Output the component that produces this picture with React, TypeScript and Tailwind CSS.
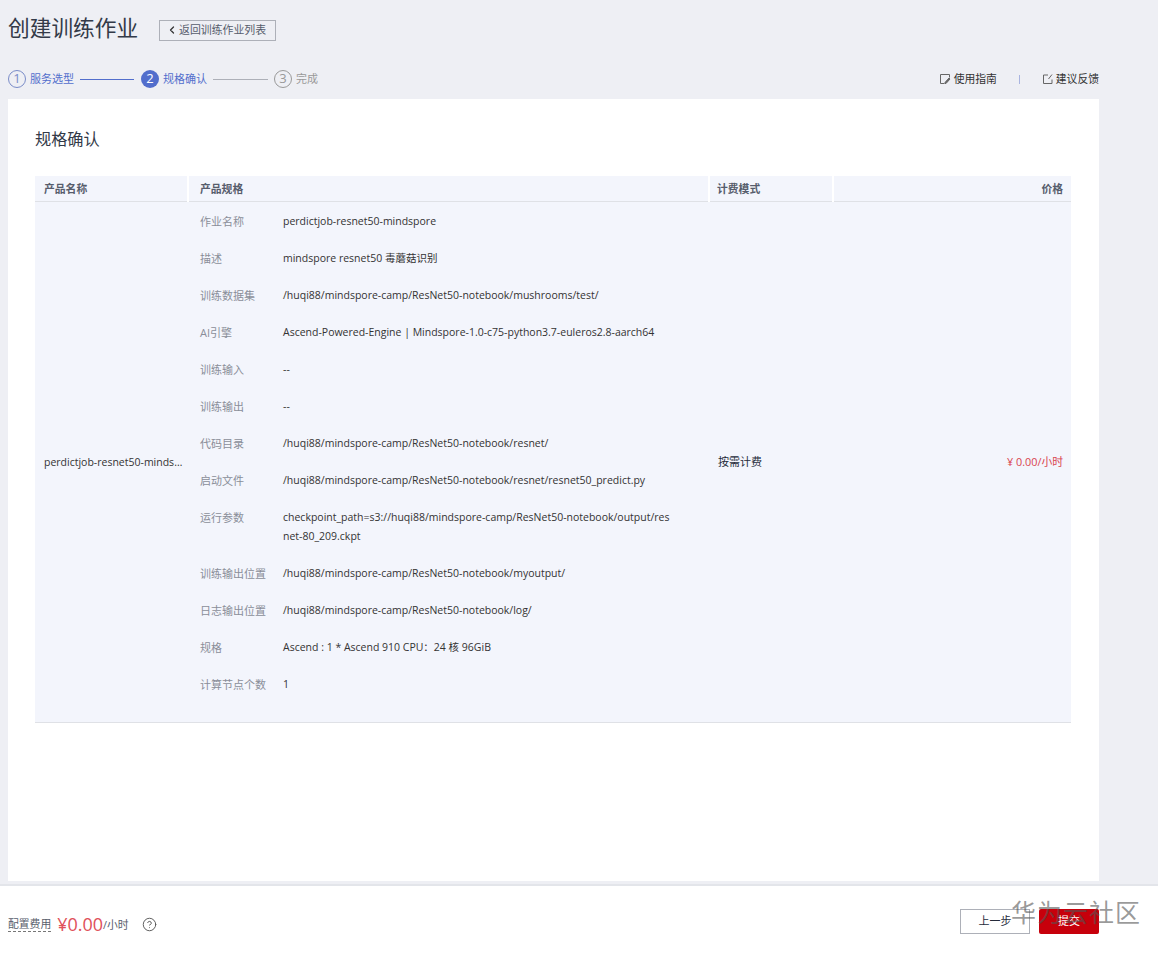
import React from 'react';
import { ChevronLeft, CircleHelp } from 'lucide-react';

const FONT = "font-['Open_Sans','Noto_Sans_CJK_SC',sans-serif]";

const SPECS: { label: string; value: string }[] = [
  { label: '作业名称', value: 'perdictjob-resnet50-mindspore' },
  { label: '描述', value: 'mindspore resnet50 毒蘑菇识别' },
  { label: '训练数据集', value: '/huqi88/mindspore-camp/ResNet50-notebook/mushrooms/test/' },
  { label: 'AI引擎', value: 'Ascend-Powered-Engine | Mindspore-1.0-c75-python3.7-euleros2.8-aarch64' },
  { label: '训练输入', value: '--' },
  { label: '训练输出', value: '--' },
  { label: '代码目录', value: '/huqi88/mindspore-camp/ResNet50-notebook/resnet/' },
  { label: '启动文件', value: '/huqi88/mindspore-camp/ResNet50-notebook/resnet/resnet50_predict.py' },
  { label: '运行参数', value: 'checkpoint_path=s3://huqi88/mindspore-camp/ResNet50-notebook/output/resnet-80_209.ckpt' },
  { label: '训练输出位置', value: '/huqi88/mindspore-camp/ResNet50-notebook/myoutput/' },
  { label: '日志输出位置', value: '/huqi88/mindspore-camp/ResNet50-notebook/log/' },
  { label: '规格', value: 'Ascend : 1 * Ascend 910 CPU：24 核 96GiB' },
  { label: '计算节点个数', value: '1' },
];

const GuideIcon = () => (
  <svg width="12" height="12" viewBox="0 0 12 12" fill="none" stroke="#666" strokeWidth="1">
    <path d="M10.500 4.500V1.500h-9v9h4" />
    <path d="M6 9.500 10 5l1 1-4 4.500H6z" fill="#666" />
  </svg>
);

const FeedbackIcon = () => (
  <svg width="12" height="12" viewBox="0 0 12 12" fill="none" stroke="#666" strokeWidth="1">
    <path d="M6 2H1.500v8.500h8.500V6.500" />
    <path d="M6.500 6 10 1.500" />
  </svg>
);

const Step: React.FC<{ n: number; label: string; state: 'done' | 'active' | 'todo' }> = ({ n, label, state }) => (
  <div className="flex items-center gap-[4px]">
    {state === 'active' ? (
      <span className="flex h-[18px] w-[18px] items-center justify-center rounded-full bg-[#526ecc] text-[13px] text-white">{n}</span>
    ) : (
      <span className={`flex h-[18px] w-[18px] items-center justify-center rounded-full border text-[13px] ${state === 'done' ? 'border-[#7a8cc8] text-[#7a8cc8]' : 'border-[#999] text-[#999]'}`}>{n}</span>
    )}
    <span className={`text-[11px] leading-[18px] ${state === 'todo' ? 'text-[#999]' : 'text-[#526ecc]'}`}>{label}</span>
  </div>
);

export default function App() {
  return (
    <div className={`relative flex h-[954px] w-[1158px] flex-col overflow-hidden bg-[#eeeff4] ${FONT}`}>
      <div className="flex-1 pl-[8px] pr-[59px]">
        <div className="flex h-[60px] items-center pb-[4px]">
          <h1 className="w-[130px] text-[21.7px] leading-[30px] font-normal whitespace-nowrap text-[#333a48]">创建训练作业</h1>
          <button className="mt-[4px] ml-[21px] flex h-[21px] w-[117px] items-center border border-[#adb0b8] pl-[6px] text-[10.900px] text-[#575d6c]">
            <ChevronLeft className="mr-[1px] h-[12px] w-[12px] text-[#333]" strokeWidth={2.5} />
            返回训练作业列表
          </button>
        </div>

        <div className="flex h-[39px] items-center justify-between pb-[1px]">
          <div className="flex items-center">
            <Step n={1} label="服务选型" state="done" />
            <div className="mr-[7px] ml-[6px] h-px w-[54px] bg-[#526ecc]" />
            <Step n={2} label="规格确认" state="active" />
            <div className="mx-[6px] h-px w-[55px] bg-[#adb0b8]" />
            <Step n={3} label="完成" state="todo" />
          </div>
          <div className="flex items-center text-[10.800px] text-[#333]">
            <span className="flex items-center gap-[3px]"><GuideIcon />使用指南</span>
            <span className="mx-[22px] h-[9px] w-px bg-[#a9b4e0]" />
            <span className="flex items-center gap-[2px]"><FeedbackIcon />建议反馈</span>
          </div>
        </div>

        <div className="h-[782px] bg-white px-[27px] pt-[30px]">
          <h2 className="text-[16.200px] leading-[20px] font-normal text-[#333a48]">规格确认</h2>
          <table className="mt-[27px] w-[1036px] table-fixed border-collapse text-[10.500px]">
            <colgroup>
              <col className="w-[153px]" />
              <col className="w-[521px]" />
              <col className="w-[124px]" />
              <col className="w-[238px]" />
            </colgroup>
            <thead>
              <tr className="h-[25px] border-b border-[#dfe1e6] bg-[#f3f5fc] text-[10.800px] text-[#575d6c]">
                <th className="pt-[1px] pl-[9px] text-left font-bold">产品名称</th>
                <th className="border-l-2 border-white pt-[1px] pl-[11px] text-left font-bold">产品规格</th>
                <th className="border-l-2 border-white pt-[1px] pl-[7px] text-left font-bold">计费模式</th>
                <th className="border-l-2 border-white pt-[1px] pr-[8px] text-right font-bold">价格</th>
              </tr>
            </thead>
            <tbody>
              <tr className="border-b border-[#dfe1e6] bg-[#f3f5fc] text-[#333]">
                <td className="max-w-0 truncate pt-[2px] pr-[5px] pl-[9px]">perdictjob-resnet50-mindspore</td>
                <td className="pt-[10px] pb-[28px] pl-[12px]">
                  {SPECS.map((spec) => (
                    <div key={spec.label} className="flex pb-[18px] leading-[19px] last:pb-0">
                      <span className="w-[83px] shrink-0 text-[11px] text-[#8a8e99]">{spec.label}</span>
                      <span className="w-[391px] break-all text-[#333]">{spec.value}</span>
                    </div>
                  ))}
                </td>
                <td className="pt-[2px] pl-[9px] text-[11px] text-[#252b3a]">按需计费</td>
                <td className="pt-[2px] pr-[8px] text-right text-[10.800px] text-[#d9434e]">¥ 0.00/小时</td>
              </tr>
            </tbody>
          </table>
        </div>
      </div>

      <div className="flex h-[70px] items-center justify-between border-t-2 border-[#e3e5ea] bg-white pr-[59px] pl-[8px]">
        <div className="mt-[8px] flex items-center">
          <span className="border-b border-dashed border-[#777] text-[10.800px] leading-[14px] text-[#575d6c]">配置费用</span>
          <span className="ml-[6px] text-[18px] leading-[24px] text-[#e0505a]">¥0.00</span>
          <span className="mt-[3px] text-[10.800px] text-[#575d6c]">/小时</span>
          <CircleHelp className="ml-[13px] h-[15px] w-[15px] text-[#555]" strokeWidth={1.5} />
        </div>
        <div className="mt-[3px] flex items-center gap-[9px]">
          <button className="h-[25px] w-[70px] border border-[#adb0b8] bg-white text-[11px] text-[#252b3a]">上一步</button>
          <button className="h-[25px] w-[60px] rounded-[2px] bg-[#c7000b] text-[11px] text-white">提交</button>
        </div>
      </div>

      {/* watermark over the footer buttons */}
      <span className="absolute top-[897px] left-[1011px] text-[25px] leading-[30px] tracking-[1px] text-[#555]/60">华为云社区</span>
    </div>
  );
}
